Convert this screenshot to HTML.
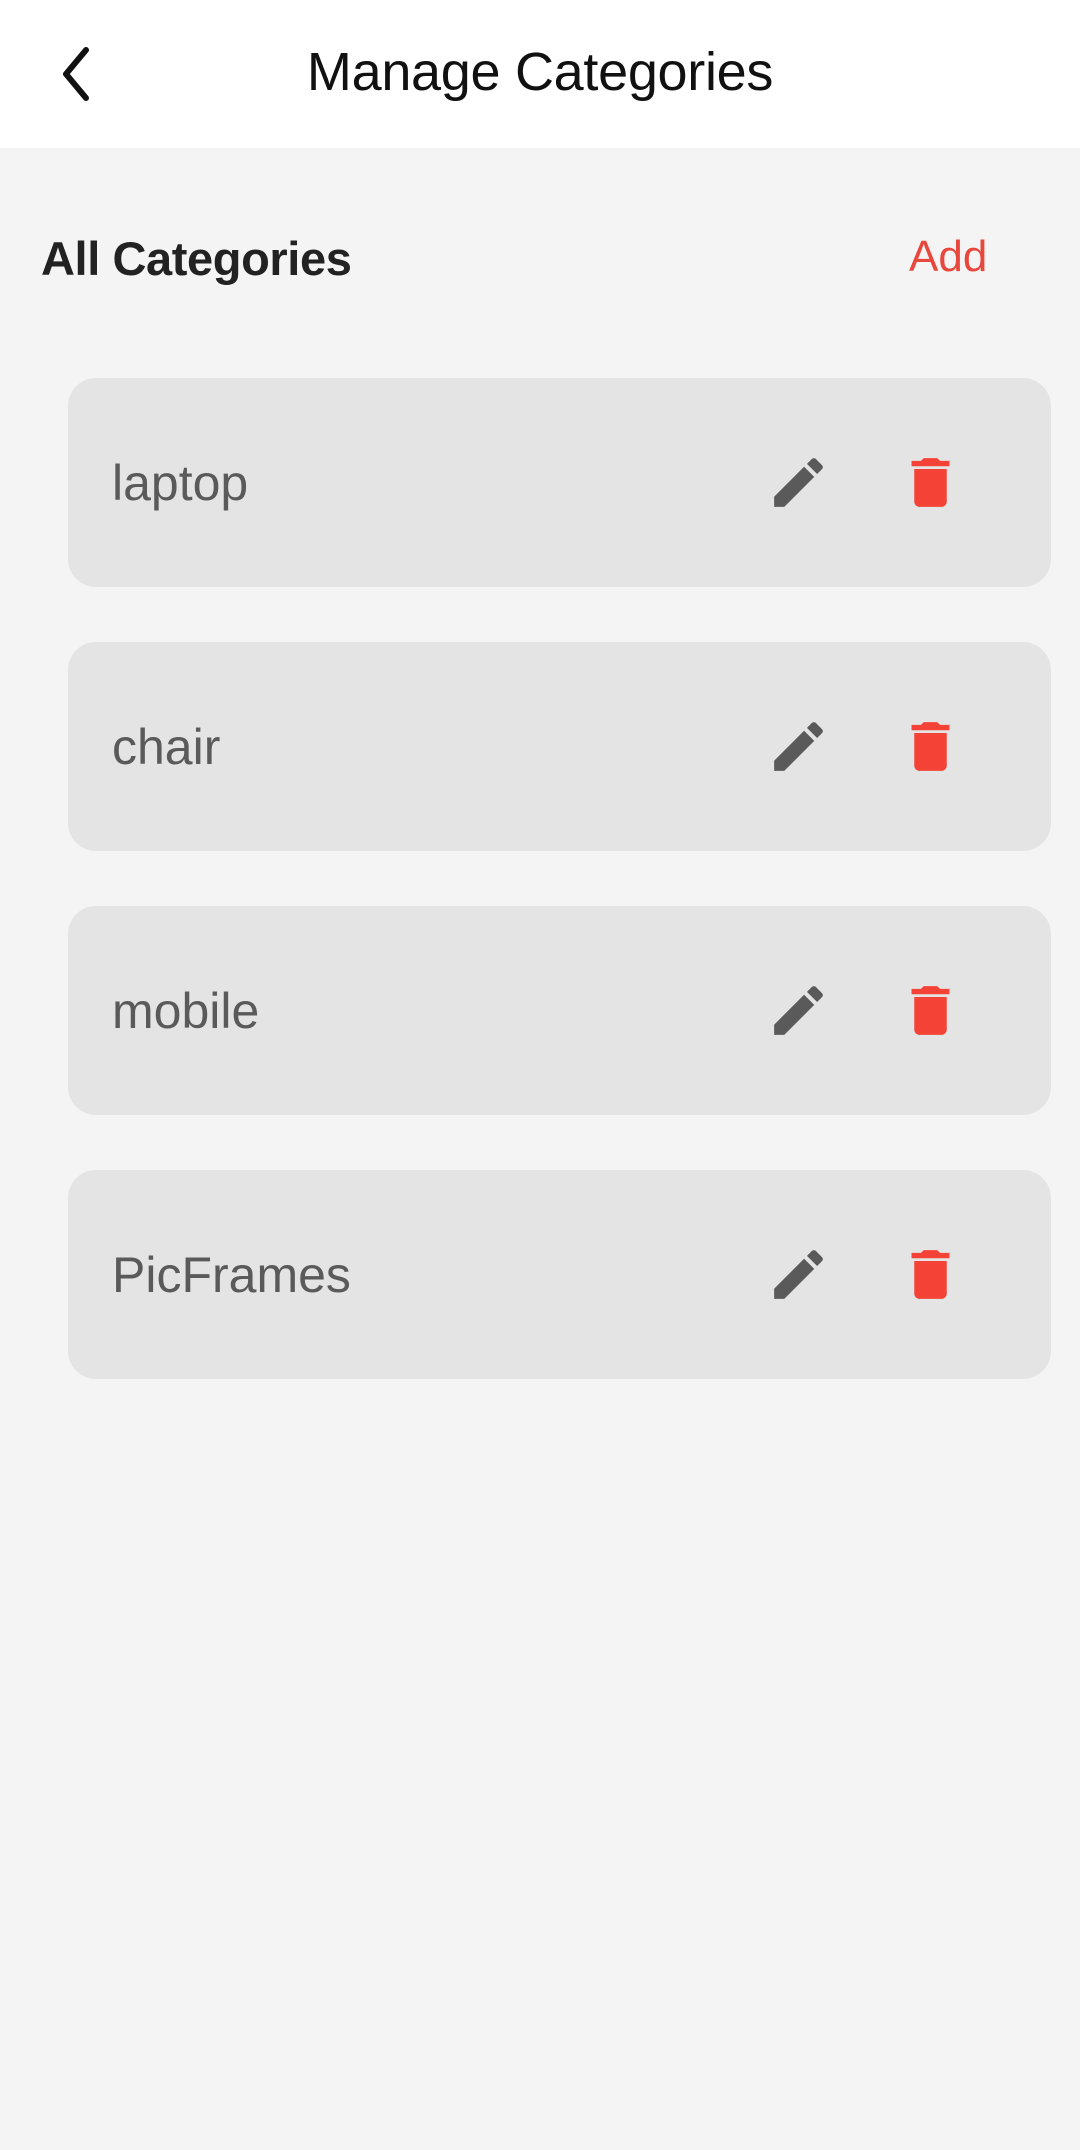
<!DOCTYPE html>
<html><head><meta charset="utf-8"><style>
*{margin:0;padding:0;box-sizing:border-box}
body{width:1080px;height:2150px;background:#f4f4f4;font-family:"Liberation Sans",sans-serif;position:relative;overflow:hidden}
.hdr{position:absolute;left:0;top:0;width:1080px;height:148px;background:#fff}
.title{position:absolute;left:0;width:1080px;top:41px;text-align:center;font-size:54px;color:#111;letter-spacing:-0.3px}
.back{position:absolute;left:56px;top:44px}
.h2{position:absolute;left:41px;top:231px;font-size:47px;font-weight:bold;color:#222;letter-spacing:-0.4px}
.add{position:absolute;left:909px;top:232px;font-size:44px;color:#e8473c}
.card{position:absolute;left:68px;width:983px;height:209px;background:#e4e4e4;border-radius:28px}
.card span{position:absolute;left:44px;top:76px;font-size:50px;color:#5a5a5a}
.card svg{position:absolute;top:72px;width:65px;height:65px}
</style></head><body>
<div class="hdr">
<svg class="back" width="44" height="60" viewBox="0 0 44 60"><path d="M30 6 L10 30 L30 54" fill="none" stroke="#111" stroke-width="6" stroke-linecap="round" stroke-linejoin="round"/></svg>
<div class="title">Manage Categories</div>
</div>
<div class="h2">All Categories</div>
<div class="add">Add</div>

<div class="card" style="top:378px"><span>laptop</span>
<svg style="left:698px" viewBox="0 0 24 24"><path fill="#5a5a5a" d="M3 17.25V21h3.75L17.81 9.94l-3.75-3.75L3 17.25zM20.71 7.04a1 1 0 000-1.41l-2.34-2.34a1 1 0 00-1.41 0l-1.83 1.83 3.75 3.75 1.83-1.83z"/></svg>
<svg style="left:830px" viewBox="0 0 24 24"><path fill="#f44336" d="M6 19c0 1.1.9 2 2 2h8c1.1 0 2-.9 2-2V7H6v12zM19 4h-3.5l-1-1h-5l-1 1H5v2h14V4z"/></svg></div>

<div class="card" style="top:642px"><span>chair</span>
<svg style="left:698px" viewBox="0 0 24 24"><path fill="#5a5a5a" d="M3 17.25V21h3.75L17.81 9.94l-3.75-3.75L3 17.25zM20.71 7.04a1 1 0 000-1.41l-2.34-2.34a1 1 0 00-1.41 0l-1.83 1.83 3.75 3.75 1.83-1.83z"/></svg>
<svg style="left:830px" viewBox="0 0 24 24"><path fill="#f44336" d="M6 19c0 1.1.9 2 2 2h8c1.1 0 2-.9 2-2V7H6v12zM19 4h-3.5l-1-1h-5l-1 1H5v2h14V4z"/></svg></div>

<div class="card" style="top:906px"><span>mobile</span>
<svg style="left:698px" viewBox="0 0 24 24"><path fill="#5a5a5a" d="M3 17.25V21h3.75L17.81 9.94l-3.75-3.75L3 17.25zM20.71 7.04a1 1 0 000-1.41l-2.34-2.34a1 1 0 00-1.41 0l-1.83 1.83 3.75 3.75 1.83-1.83z"/></svg>
<svg style="left:830px" viewBox="0 0 24 24"><path fill="#f44336" d="M6 19c0 1.1.9 2 2 2h8c1.1 0 2-.9 2-2V7H6v12zM19 4h-3.5l-1-1h-5l-1 1H5v2h14V4z"/></svg></div>

<div class="card" style="top:1170px"><span>PicFrames</span>
<svg style="left:698px" viewBox="0 0 24 24"><path fill="#5a5a5a" d="M3 17.25V21h3.75L17.81 9.94l-3.75-3.75L3 17.25zM20.71 7.04a1 1 0 000-1.41l-2.34-2.34a1 1 0 00-1.41 0l-1.83 1.83 3.75 3.75 1.83-1.83z"/></svg>
<svg style="left:830px" viewBox="0 0 24 24"><path fill="#f44336" d="M6 19c0 1.1.9 2 2 2h8c1.1 0 2-.9 2-2V7H6v12zM19 4h-3.5l-1-1h-5l-1 1H5v2h14V4z"/></svg></div>
</body></html>
